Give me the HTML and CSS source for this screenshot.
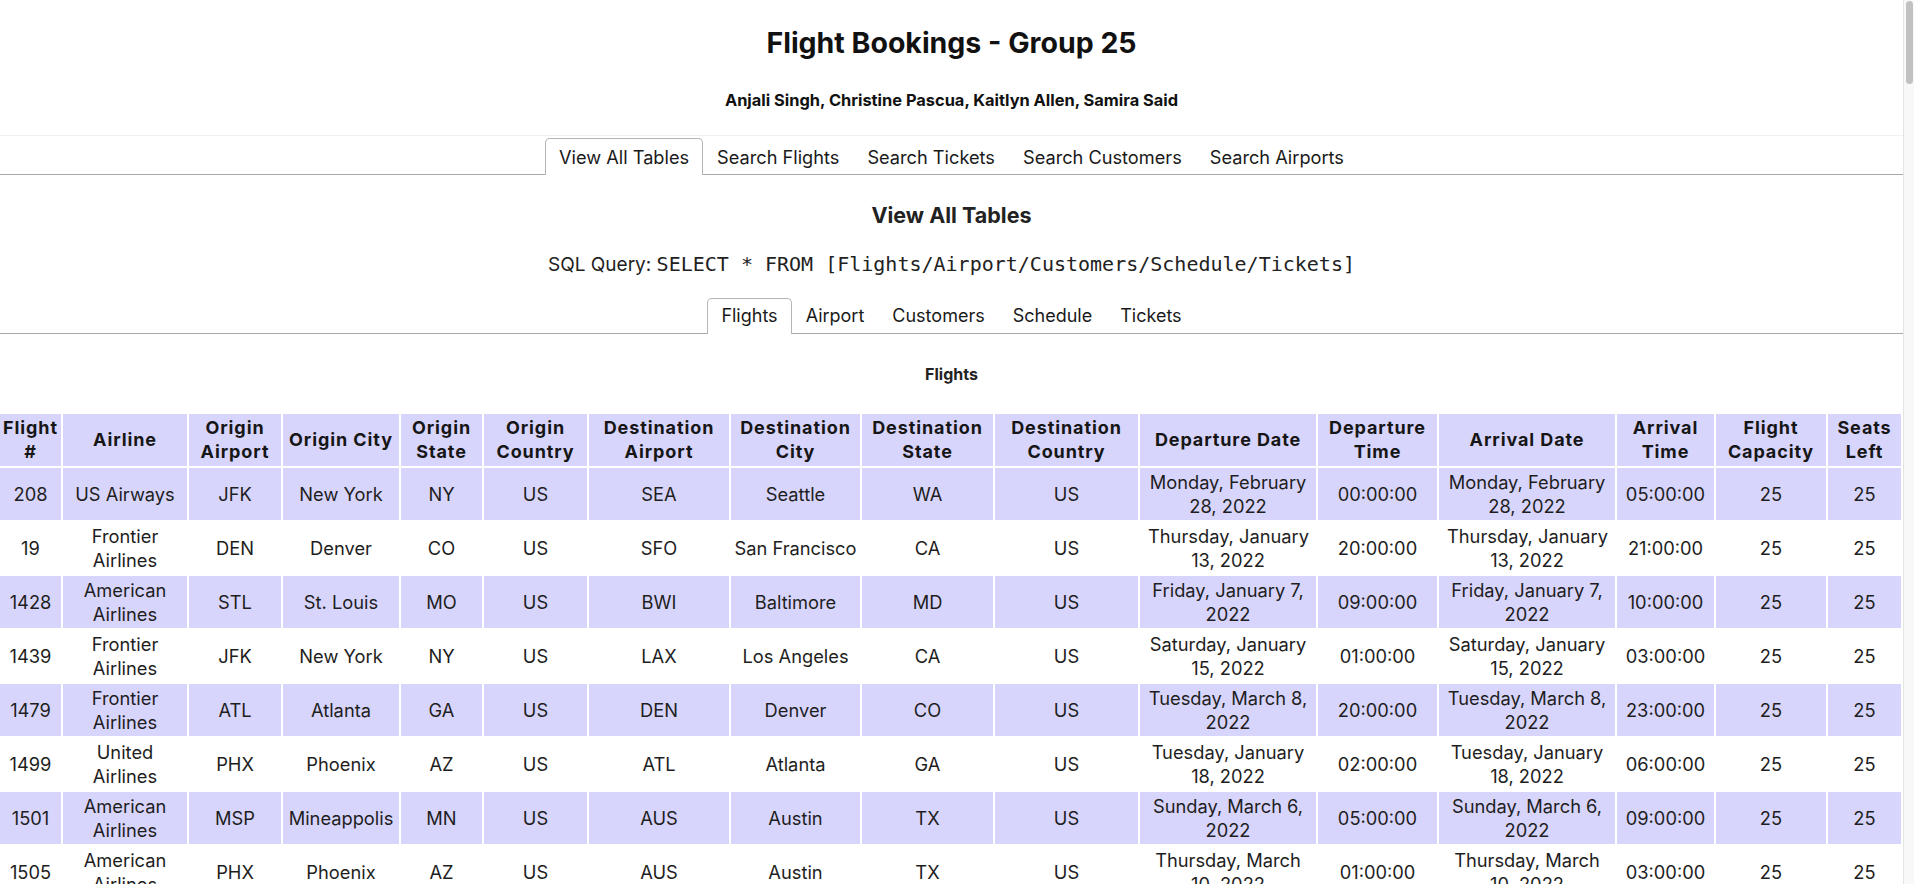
FILE: index.html
```html
<!DOCTYPE html>
<html lang="en">
<head>
<meta charset="utf-8">
<title>Flight Bookings - Group 25</title>
<link rel="stylesheet" href="styles.css">
</head>
<body>
<div class="page">
  <header class="site-header">
    <h1 class="site-title">Flight Bookings - Group 25</h1>
    <p class="site-authors">Anjali Singh, Christine Pascua, Kaitlyn Allen, Samira Said</p>
  </header>
  <nav class="tabs tabs-main">
    <ul class="tab-list">
      <li class="tab tab-active">View All Tables</li>
      <li class="tab">Search Flights</li>
      <li class="tab">Search Tickets</li>
      <li class="tab">Search Customers</li>
      <li class="tab">Search Airports</li>
    </ul>
  </nav>
  <main class="panel">
    <h2 class="panel-title">View All Tables</h2>
    <p class="sql">SQL Query: <code class="sql-code">SELECT * FROM [Flights/Airport/Customers/Schedule/Tickets]</code></p>
    <nav class="tabs tabs-sub">
      <ul class="tab-list">
        <li class="tab tab-active">Flights</li>
        <li class="tab">Airport</li>
        <li class="tab">Customers</li>
        <li class="tab">Schedule</li>
        <li class="tab">Tickets</li>
      </ul>
    </nav>
    <h3 class="table-caption">Flights</h3>
    <table class="data-table">
      <colgroup>
        <col class="c-num"><col class="c-airline"><col class="c-oap"><col class="c-ocity"><col class="c-ost"><col class="c-octry">
        <col class="c-dap"><col class="c-dcity"><col class="c-dst"><col class="c-dctry"><col class="c-ddate"><col class="c-dtime">
        <col class="c-adate"><col class="c-atime"><col class="c-cap"><col class="c-left">
      </colgroup>
      <thead>
        <tr>
          <th>Flight #</th><th>Airline</th><th>Origin Airport</th><th>Origin City</th><th>Origin State</th><th>Origin Country</th><th>Destination Airport</th><th>Destination City</th><th>Destination State</th><th>Destination Country</th><th>Departure Date</th><th>Departure Time</th><th>Arrival Date</th><th>Arrival Time</th><th>Flight Capacity</th><th>Seats Left</th>
        </tr>
      </thead>
      <tbody>
        <tr><td>208</td><td>US Airways</td><td>JFK</td><td>New York</td><td>NY</td><td>US</td><td>SEA</td><td>Seattle</td><td>WA</td><td>US</td><td class="date">Monday,&nbsp;February 28, 2022</td><td>00:00:00</td><td class="date">Monday,&nbsp;February 28, 2022</td><td>05:00:00</td><td>25</td><td>25</td></tr>
        <tr><td>19</td><td>Frontier Airlines</td><td>DEN</td><td>Denver</td><td>CO</td><td>US</td><td>SFO</td><td>San Francisco</td><td>CA</td><td>US</td><td class="date">Thursday,&nbsp;January 13, 2022</td><td>20:00:00</td><td class="date">Thursday,&nbsp;January 13, 2022</td><td>21:00:00</td><td>25</td><td>25</td></tr>
        <tr><td>1428</td><td>American Airlines</td><td>STL</td><td>St. Louis</td><td>MO</td><td>US</td><td>BWI</td><td>Baltimore</td><td>MD</td><td>US</td><td class="date">Friday,&nbsp;January 7, 2022</td><td>09:00:00</td><td class="date">Friday,&nbsp;January 7, 2022</td><td>10:00:00</td><td>25</td><td>25</td></tr>
        <tr><td>1439</td><td>Frontier Airlines</td><td>JFK</td><td>New York</td><td>NY</td><td>US</td><td>LAX</td><td>Los Angeles</td><td>CA</td><td>US</td><td class="date">Saturday,&nbsp;January 15, 2022</td><td>01:00:00</td><td class="date">Saturday,&nbsp;January 15, 2022</td><td>03:00:00</td><td>25</td><td>25</td></tr>
        <tr><td>1479</td><td>Frontier Airlines</td><td>ATL</td><td>Atlanta</td><td>GA</td><td>US</td><td>DEN</td><td>Denver</td><td>CO</td><td>US</td><td class="date">Tuesday,&nbsp;March 8, 2022</td><td>20:00:00</td><td class="date">Tuesday,&nbsp;March 8, 2022</td><td>23:00:00</td><td>25</td><td>25</td></tr>
        <tr><td>1499</td><td>United Airlines</td><td>PHX</td><td>Phoenix</td><td>AZ</td><td>US</td><td>ATL</td><td>Atlanta</td><td>GA</td><td>US</td><td class="date">Tuesday,&nbsp;January 18, 2022</td><td>02:00:00</td><td class="date">Tuesday,&nbsp;January 18, 2022</td><td>06:00:00</td><td>25</td><td>25</td></tr>
        <tr><td>1501</td><td>American Airlines</td><td>MSP</td><td>Mineappolis</td><td>MN</td><td>US</td><td>AUS</td><td>Austin</td><td>TX</td><td>US</td><td class="date">Sunday,&nbsp;March 6, 2022</td><td>05:00:00</td><td class="date">Sunday,&nbsp;March 6, 2022</td><td>09:00:00</td><td>25</td><td>25</td></tr>
        <tr><td>1505</td><td>American Airlines</td><td>PHX</td><td>Phoenix</td><td>AZ</td><td>US</td><td>AUS</td><td>Austin</td><td>TX</td><td>US</td><td class="date">Thursday,&nbsp;March 10, 2022</td><td>01:00:00</td><td class="date">Thursday,&nbsp;March 10, 2022</td><td>03:00:00</td><td>25</td><td>25</td></tr>
      </tbody>
    </table>
  </main>
</div>
<div class="scrollbar" aria-hidden="true"><div class="scrollbar-thumb"></div></div>
</body>
</html>
```

FILE: styles.css
```css
html {
  background: #fff;
}
body {
  margin: 0;
  font-family: Inter, "Noto Sans", "Liberation Sans", sans-serif;
  color: #111;
}
.page {
  margin-right: 11px;
}
.scrollbar {
  position: fixed;
  top: 0;
  right: 0;
  bottom: 0;
  width: 10px;
  background: #f8f8f8;
  border-left: 1px solid #e4e4e4;
}
.scrollbar-thumb {
  position: absolute;
  top: 1px;
  left: 2px;
  width: 7px;
  height: 83px;
  border-radius: 4px;
  background: #c1c1c1;
}
.site-header {
  text-align: center;
  padding: 26px 0 25px;
  border-bottom: 1px solid #f0f0f0;
}
.site-title {
  margin: 0;
  font-size: 28.5px;
  line-height: 34px;
  font-weight: 700;
}
.site-authors {
  margin: 30px 0 0;
  font-size: 16.4px;
  line-height: 20px;
  font-weight: 700;
}
.tabs {
  border-bottom: 1px solid #a9a9a9;
}
.tab-list {
  list-style: none;
  margin: 0;
  padding: 0;
  display: flex;
  justify-content: center;
}
.tab {
  font-size: 18.2px;
  line-height: 33px;
  padding: 2px 13px 0;
  border: 1px solid transparent;
  border-bottom: none;
  border-radius: 5px 5px 0 0;
  margin-bottom: -1px;
  color: #1a1a1a;
}
.tab-active {
  border-color: #b5b5b5;
  background: #fff;
  padding-bottom: 1px;
}
.tabs-main {
  margin-top: 2px;
}
.panel {
  text-align: center;
}
.panel-title {
  margin: 28px 0 0;
  font-size: 21.5px;
  line-height: 24px;
  font-weight: 700;
  color: #222;
}
.sql {
  margin: 25px 0 0;
  font-size: 19px;
  line-height: 24px;
  color: #222;
}
.sql-code {
  font-family: "DejaVu Sans Mono", "Liberation Mono", monospace;
  font-size: 20px;
}
.tabs-sub {
  margin-top: 21px;
}
.tabs-sub .tab {
  font-size: 18px;
  padding-top: 0;
  line-height: 34px;
}
.table-caption {
  margin: 30px 0 0;
  font-size: 16px;
  line-height: 20px;
  font-weight: 700;
  color: #222;
}
.data-table {
  margin-top: 30px;
  width: 100%;
  table-layout: fixed;
  border-collapse: separate;
  border-spacing: 0;
  font-size: 18.3px;
  line-height: 24px;
  color: #1e1e1e;
}
.c-num { width: 63px; }
.c-airline { width: 126px; }
.c-oap { width: 94px; }
.c-ocity { width: 118px; }
.c-ost { width: 83px; }
.c-octry { width: 105px; }
.c-dap { width: 142px; }
.c-dcity { width: 131px; }
.c-dst { width: 133px; }
.c-dctry { width: 145px; }
.c-ddate { width: 178px; }
.c-dtime { width: 121px; }
.c-adate { width: 178px; }
.c-atime { width: 99px; }
.c-cap { width: 112px; }
.c-left { width: 75px; }
.data-table th,
.data-table td {
  padding: 2px 1px;
  text-align: center;
  vertical-align: middle;
  border-right: 2px solid #fff;
  border-bottom: 2px solid #fff;
}
.data-table td.date {
  padding: 2px 8px;
}
.data-table th {
  background: #d8d5fc;
  font-size: 18px;
  font-weight: 700;
  letter-spacing: 0.9px;
  color: #161616;
}
.data-table tbody tr:nth-child(odd) td {
  background: #d8d5fc;
}
.data-table tbody tr:nth-child(even) td {
  background: #fff;
}
```
